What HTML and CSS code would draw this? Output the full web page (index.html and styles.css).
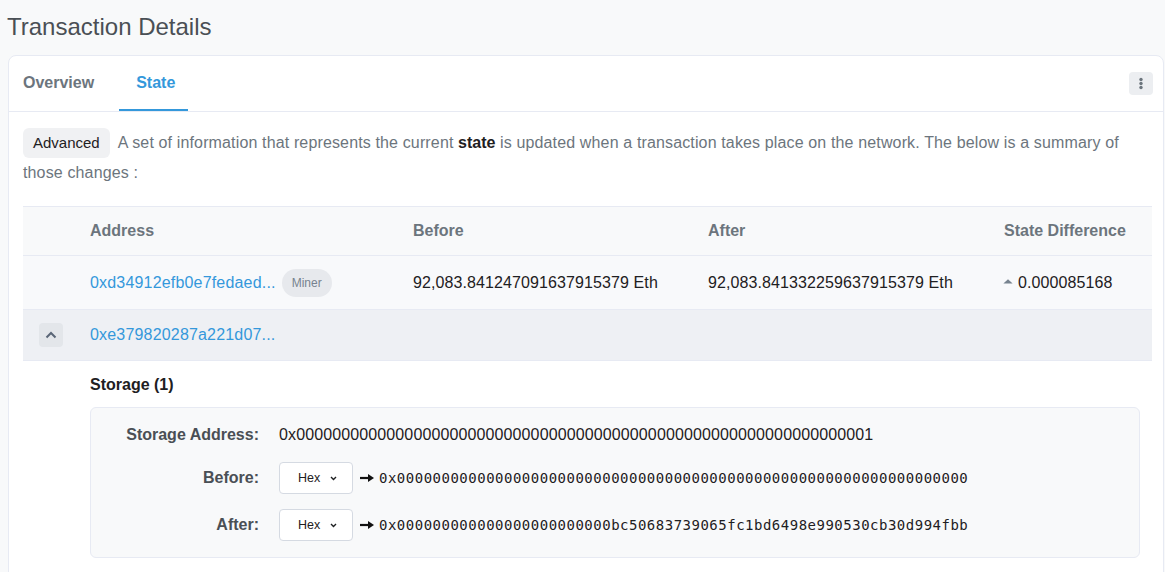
FILE: index.html
```
<!DOCTYPE html>
<html>
<head>
<meta charset="utf-8">
<link rel="stylesheet" href="styles.css">
</head>
<body>
<div class="page">
  <h1 class="title">Transaction Details</h1>
  <div class="card">
    <div class="tabs">
      <nav class="tab-list">
        <a class="tab">Overview</a>
        <a class="tab active">State</a>
      </nav>
      <button class="kebab" aria-label="More">
        <svg width="24" height="23" viewBox="0 0 24 23"><circle cx="12" cy="7.5" r="1.7" fill="#6c757d"/><circle cx="12" cy="11.5" r="1.7" fill="#6c757d"/><circle cx="12" cy="15.5" r="1.7" fill="#6c757d"/></svg>
      </button>
    </div>
    <div class="card-body">
      <div class="intro"><span class="badge">Advanced</span><span class="intro-text">A set of information that represents the current <b>state</b> is updated when a transaction takes place on the network. The below is a summary of those changes :</span></div>

      <div class="state-table">
        <div class="row head">
          <div class="cell"></div>
          <div class="cell">Address</div>
          <div class="cell">Before</div>
          <div class="cell">After</div>
          <div class="cell">State Difference</div>
        </div>
        <div class="row r1">
          <div class="cell"></div>
          <div class="cell addr"><a class="link">0xd34912efb0e7fedaed...</a><span class="pill">Miner</span></div>
          <div class="cell">92,083.841247091637915379 Eth</div>
          <div class="cell">92,083.841332259637915379 Eth</div>
          <div class="cell diff"><svg class="tri" width="10" height="5" viewBox="0 0 10 5"><path d="M5 0.2 L9.6 4.6 L0.4 4.6 Z" fill="#77838f"/></svg>0.000085168</div>
        </div>
        <div class="row r2">
          <div class="cell center"><span class="toggle"><svg width="12" height="8" viewBox="0 0 12 8"><path d="M1.5 6.5 L6 2 L10.5 6.5" fill="none" stroke="#5a6677" stroke-width="2"/></svg></span></div>
          <div class="cell"><a class="link">0xe379820287a221d07...</a></div>
          <div class="cell"></div>
          <div class="cell"></div>
          <div class="cell"></div>
        </div>
        <div class="detail">
          <div class="detail-title">Storage (1)</div>
          <div class="storage">
            <div class="srow">
              <div class="slabel">Storage Address:</div>
              <div class="svalue">0x0000000000000000000000000000000000000000000000000000000000000001</div>
            </div>
            <div class="srow">
              <div class="slabel">Before:</div>
              <div class="svalue">
                <span class="select">Hex<svg width="7" height="5" viewBox="0 0 7 5"><path d="M1 1 L3.5 3.5 L6 1" fill="none" stroke="#1e2022" stroke-width="1.4"/></svg></span>
                <svg class="arrow" width="14" height="10" viewBox="0 0 14 10"><path d="M0 5 H9" stroke="#111" stroke-width="2.2"/><path d="M8 1 L14 5 L8 9 Z" fill="#111"/></svg>
                <span class="mono">0x0000000000000000000000000000000000000000000000000000000000000000</span>
              </div>
            </div>
            <div class="srow">
              <div class="slabel">After:</div>
              <div class="svalue">
                <span class="select">Hex<svg width="7" height="5" viewBox="0 0 7 5"><path d="M1 1 L3.5 3.5 L6 1" fill="none" stroke="#1e2022" stroke-width="1.4"/></svg></span>
                <svg class="arrow" width="14" height="10" viewBox="0 0 14 10"><path d="M0 5 H9" stroke="#111" stroke-width="2.2"/><path d="M8 1 L14 5 L8 9 Z" fill="#111"/></svg>
                <span class="mono">0x000000000000000000000000bc50683739065fc1bd6498e990530cb30d994fbb</span>
              </div>
            </div>
          </div>
        </div>
      </div>
    </div>
  </div>
</div>
</body>
</html>
```
FILE: styles.css
```
* { box-sizing: border-box; }
html, body { height: 100%; }
body {
  margin: 0;
  background: #f8f9fa;
  font-family: "Liberation Sans", Arial, sans-serif;
  font-size: 16px;
  color: #1e2022;
  overflow: hidden;
}
.page { padding: 13px 0 0 8px; }
.title {
  margin: 0 0 14px -1px;
  font-size: 24px;
  line-height: 28px;
  font-weight: 400;
  color: #4a4f55;
}
.card {
  width: 1156px;
  background: #fff;
  border: 1px solid #e7eaf3;
  border-radius: 8px;
  padding-bottom: 40px;
}
.tabs {
  display: flex;
  align-items: center;
  justify-content: space-between;
  height: 56px;
  border-bottom: 1px solid #e7eaf3;
  padding-right: 10px;
}
.tab-list { display: flex; height: 100%; gap: 10px; }
.tab {
  display: flex;
  align-items: center;
  padding: 0 15px 1px;
  font-weight: 700;
  color: #6c757d;
}
.tab:first-child { padding-left: 14px; }
.tab.active {
  color: #3498db;
  box-shadow: inset 0 -2px 0 #3498db;
  padding-left: 17px;
  padding-right: 13px;
}
.kebab {
  width: 24px;
  height: 23px;
  padding: 0;
  border: 0;
  border-radius: 4px;
  background: #eceef1;
  display: flex;
  align-items: center;
  justify-content: center;
}
.card-body { padding: 16px 11px 0 14px; }
.intro {
  line-height: 30px;
  color: #6c757d;
  letter-spacing: 0.14px;
}
.intro b { color: #1e2022; letter-spacing: 0; }
.badge {
  display: inline-block;
  vertical-align: top;
  padding: 0 10px;
  margin-right: 8px;
  line-height: 30px;
  font-size: 15px;
  letter-spacing: 0;
  color: #1e2022;
  background: #f0f1f3;
  border-radius: 6px;
}
.state-table { margin-top: 18px; }
.row {
  display: grid;
  grid-template-columns: 55px 323px 295px 296px 1fr;
  align-items: center;
  border-bottom: 1px solid #e7eaf3;
  letter-spacing: 0.1px;
}
.cell { padding: 0 12px; white-space: nowrap; }
.cell.center { display: flex; justify-content: center; padding: 0; }
.head {
  height: 50px;
  border-top: 1px solid #e7eaf3;
  background: #f8f9fa;
  font-weight: 700;
  color: #6c757d;
  letter-spacing: 0;
}
.r1 { height: 54px; background: #f8f9fb; }
.r2 { height: 51px; background: #eef0f4; }
.link { color: #3498db; letter-spacing: 0.18px; }
.addr { display: flex; align-items: center; }
.pill {
  margin-left: 6px;
  height: 28px;
  line-height: 28px;
  padding: 0 10px;
  border-radius: 14px;
  background: #e7e9ed;
  color: #77838f;
  font-size: 12px;
  letter-spacing: 0;
}
.diff { display: flex; align-items: center; }
.tri { margin: 0 5px 3px -1px; }
.toggle {
  width: 24px;
  height: 24px;
  border-radius: 4px;
  background: #e3e6ea;
  display: flex;
  align-items: center;
  justify-content: center;
}
.detail { padding: 14px 12px 0 67px; }
.detail-title {
  font-weight: 700;
  line-height: 20px;
  margin-bottom: 12px;
}
.storage {
  background: #f8f9fa;
  border: 1px solid #e7eaf3;
  border-radius: 6px;
  padding: 15px 0 16px;
  display: flex;
  flex-direction: column;
  gap: 15px;
}
.srow {
  display: grid;
  grid-template-columns: 168px 1fr;
  column-gap: 20px;
  align-items: center;
  min-height: 24px;
}
.slabel {
  text-align: right;
  font-weight: 700;
  color: #4a4f55;
}
.svalue { display: flex; align-items: center; white-space: nowrap; letter-spacing: 0.12px; }
.select {
  width: 74px;
  height: 32px;
  display: flex;
  align-items: center;
  gap: 10px;
  padding-left: 18px;
  background: #fff;
  border: 1px solid #d5dae2;
  border-radius: 4px;
  font-size: 12.5px;
  letter-spacing: 0;
}
.arrow { margin: 0 5px 0 7px; }
.mono {
  font-family: "DejaVu Sans Mono", "Liberation Mono", monospace;
  font-size: 14px;
  letter-spacing: 0.5px;
}
```
